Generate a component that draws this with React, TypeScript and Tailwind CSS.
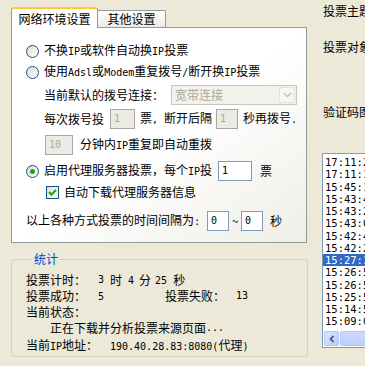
import React from "react";

// ASCII runs: SimSun-like half width
const A: React.FC<{ children: React.ReactNode }> = ({ children }) => (
  <span className="font-['DejaVu_Sans_Mono',monospace] text-[10px]">{children}</span>
);

const Radio: React.FC<{ checked?: boolean }> = ({ checked }) => (
  <div className="w-[13px] h-[13px] rounded-full border border-[#1C5180] bg-gradient-to-br from-[#DCDCD7] to-white flex items-center justify-center shrink-0">
    {checked && <div className="w-[5px] h-[5px] rounded-full bg-[#21A121]" />}
  </div>
);

const Checkbox: React.FC = () => (
  <div className="w-[13px] h-[13px] border border-[#1C5180] bg-gradient-to-br from-[#DCDCD7] to-white flex items-center justify-center shrink-0">
    <svg width="9" height="9" viewBox="0 0 9 9">
      <path d="M1 4 L3.5 6.5 L8 2" fill="none" stroke="#21A121" strokeWidth="2" />
    </svg>
  </div>
);

const TextBox: React.FC<{ value: string; w: string; disabled?: boolean }> = ({ value, w, disabled }) => (
  <div
    className={
      disabled
        ? `${w} h-[20px] border border-[#A7A6AA] bg-[#EBEBE4] text-[#ACA899] flex items-center pl-[3px] shrink-0`
        : `${w} h-[20px] border border-[#7F9DB9] bg-white flex items-center pl-[3px] shrink-0`
    }
  >
    <A>{value}</A>
  </div>
);

const times = [
  "17:11:21",
  "17:11:12",
  "15:45:13",
  "15:43:44",
  "15:43:25",
  "15:43:06",
  "15:42:47",
  "15:42:28",
  "15:27:19",
  "15:26:55",
  "15:26:51",
  "15:25:58",
  "15:14:56",
  "15:09:01",
];

export default function App() {
  return (
    <div className="w-[365px] h-[366px] bg-[#ECE9D8] overflow-hidden flex font-['Noto_Sans_CJK_SC',sans-serif] text-[12px] leading-[14px] text-black">
      {/* left column */}
      <div className="ml-[11px] w-[297px] shrink-0 flex flex-col">
        {/* tabs */}
        <div className="mt-[7px] h-[20px] flex items-end relative z-10">
          <div className="w-[87px] h-[21px] -mb-px bg-white border-x border-t-2 border-x-[#919B9C] border-t-[#FFC83C] rounded-t-[3px] flex items-center justify-center">
            网络环境设置
          </div>
          <div className="w-[68px] h-[17px] border-t border-r border-[#919B9C] rounded-tr-[2px] bg-gradient-to-b from-white to-[#ECEBE6] flex items-center justify-center">
            其他设置
          </div>
        </div>

        {/* panel */}
        <div className="w-[296px] h-[216px] border border-[#919B9C] bg-gradient-to-br from-white via-white to-[#EFEEE8] flex flex-col">
          <div className="mt-[13px] h-[20px] flex items-center pl-[14px] gap-[5px]">
            <Radio />
            <span>
              不换<A>IP</A>或软件自动换<A>IP</A>投票
            </span>
          </div>
          <div className="mt-[1px] h-[20px] flex items-center pl-[14px] gap-[5px]">
            <Radio />
            <span>
              使用<A>Adsl</A>或<A>Modem</A>重复拨号<A>/</A>断开换<A>IP</A>投票
            </span>
          </div>
          <div className="mt-[3px] h-[20px] flex items-center pl-[32px]">
            <span className="w-[127px]">当前默认的拨号连接：</span>
            <div className="w-[126px] h-[20px] border border-[#C9C7BA] bg-[#F2F1EA] flex items-center">
              <span className="pl-[3px] text-[#ACA899]">宽带连接</span>
              <div className="ml-auto mr-px w-[16px] h-[16px] border border-[#E4E2D8] bg-[#F7F6F1] rounded-[2px] flex items-center justify-center">
                <svg width="9" height="6" viewBox="0 0 9 6">
                  <path d="M1 1 L4.5 4.5 L8 1" fill="none" stroke="#C9C7BA" strokeWidth="1.6" />
                </svg>
              </div>
            </div>
          </div>
          <div className="mt-[4px] h-[20px] flex items-center pl-[32px]">
            <span className="w-[66px]">每次拨号投</span>
            <TextBox value="1" w="w-[25px]" disabled />
            <span className="ml-[5px] w-[76px]">
              票<A>, </A>断开后隔
            </span>
            <TextBox value="1" w="w-[22px]" disabled />
            <span className="ml-[5px]">
              秒再拨号<A>.</A>
            </span>
          </div>
          <div className="mt-[6px] h-[20px] flex items-center pl-[33px]">
            <TextBox value="10" w="w-[28px]" disabled />
            <span className="ml-[7px]">
              分钟内<A>IP</A>重复即自动重拨
            </span>
          </div>
          <div className="mt-[6px] h-[20px] flex items-center pl-[14px]">
            <Radio checked />
            <span className="ml-[5px] w-[174px]">
              启用代理服务器投票，每个<A>IP</A>投
            </span>
            <TextBox value="1" w="w-[34px]" />
            <span className="ml-[8px]">票</span>
          </div>
          <div className="mt-[1px] h-[20px] flex items-center pl-[34px] gap-[5px]">
            <Checkbox />
            <span>自动下载代理服务器信息</span>
          </div>
          <div className="mt-[9px] h-[20px] flex items-center pl-[14px]">
            <span className="w-[181px]">
              以上各种方式投票的时间间隔为<A>:</A>
            </span>
            <TextBox value="0" w="w-[22px]" />
            <span className="w-[12px] text-center">~</span>
            <TextBox value="0" w="w-[22px]" />
            <span className="ml-[7px]">秒</span>
          </div>
        </div>

        {/* statistics */}
        <fieldset className="mt-[9px] h-[105px] border border-[#D0D0BF] rounded-[3px] pl-[14px]">
          <legend className="ml-[6px] px-[2px] text-[#0046D5]">统计</legend>
          <div className="mt-[6px] h-[16px] flex items-center">
            <span className="w-[72px]">投票计时：</span>
            <A>3</A>
            <span className="ml-[6px]">时</span>
            <span className="ml-[6px]">
              <A>4</A>
            </span>
            <span className="ml-[5px]">分</span>
            <span className="ml-[4px]">
              <A>25</A>
            </span>
            <span className="ml-[6px]">秒</span>
          </div>
          <div className="h-[16px] flex items-center">
            <span className="w-[72px]">投票成功：</span>
            <span className="w-[67px]">
              <A>5</A>
            </span>
            <span className="w-[71px]">投票失败：</span>
            <A>13</A>
          </div>
          <div className="h-[16px] flex items-center">当前状态：</div>
          <div className="h-[16px] flex items-center pl-[24px]">
            正在下载并分析投票来源页面<A>...</A>
          </div>
          <div className="mt-[2px] h-[16px] flex items-center">
            <span className="w-[84px]">
              当前<A>IP</A>地址：
            </span>
            <span>
              <A>190.40.28.83:8080(</A>代理<A>)</A>
            </span>
          </div>
        </fieldset>
      </div>

      {/* right column */}
      <div className="ml-[14px] flex-1 min-w-0 flex flex-col">
        <div className="mt-[4px] pl-[1px] whitespace-nowrap">投票主题</div>
        <div className="mt-[22px] pl-[1px] whitespace-nowrap">投票对象</div>
        <div className="mt-[51px] pl-[1px] whitespace-nowrap">验证码图</div>
        <div className="mt-[34px] w-[60px] h-[195px] border border-[#7F9DB9] bg-white flex flex-col">
          <div className="flex-1 overflow-hidden pt-[2px]">
            {times.map((t, i) => (
              <div
                key={i}
                className={
                  i === 8
                    ? "h-[12.25px] leading-[12px] pl-[2px] bg-[#316AC5] text-white font-['DejaVu_Sans_Mono',monospace] text-[10.5px] whitespace-nowrap"
                    : "h-[12.25px] leading-[12px] pl-[2px] font-['DejaVu_Sans_Mono',monospace] text-[10.5px] whitespace-nowrap"
                }
              >
                {t}
              </div>
            ))}
          </div>
          <div className="h-[17px] bg-[#FAF9F5] flex items-center gap-px px-px">
            <div className="w-[15px] h-[15px] rounded-[2px] border border-[#B4C8F6] bg-gradient-to-br from-[#DCE6FD] to-[#B8CCF7] flex items-center justify-center">
              <svg width="6" height="8" viewBox="0 0 6 8">
                <path d="M4.5 1 L1.5 4 L4.5 7" fill="none" stroke="#4D6185" strokeWidth="1.8" />
              </svg>
            </div>
            <div className="flex-1 h-[15px] rounded-[2px] border border-[#B4C8F6] bg-gradient-to-b from-[#CDDAFC] to-[#BCCFF8]" />
          </div>
        </div>
      </div>
    </div>
  );
}
